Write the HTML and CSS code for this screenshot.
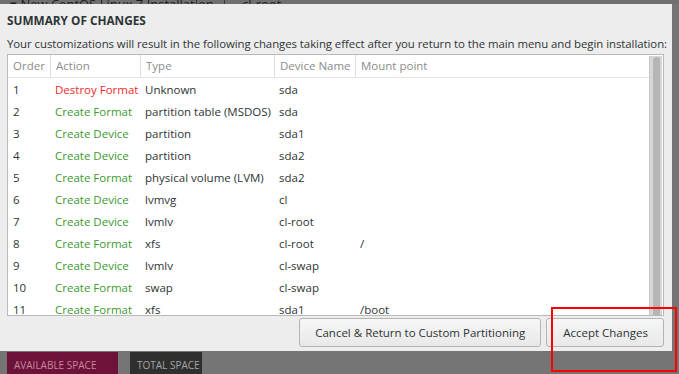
FILE: index.html
```html
<!DOCTYPE html>
<html>
<head>
    <title>Summary of Changes</title>
    <link rel="stylesheet" href="styles.css">
</head>
<body>

    <div class="behind-bar">
        <span class="behind-title">&#9662; New CentOS Linux 7 Installation</span>
        <span class="behind-mount">cl-root</span>
    </div>

    <div class="dialog">
        <h2 class="title">SUMMARY OF CHANGES</h2>
        <p class="intro">Your customizations will result in the following changes taking effect after you return to the main menu and begin installation:</p>

        <div class="table-box">
            <div class="table">
                <div class="row head">
                    <div>Order</div><div>Action</div><div>Type</div><div>Device Name</div><div>Mount point</div>
                </div>
                <div class="row"><div>1</div><div class="destroy">Destroy Format</div><div>Unknown</div><div>sda</div><div></div></div>
                <div class="row"><div>2</div><div class="create">Create Format</div><div>partition table (MSDOS)</div><div>sda</div><div></div></div>
                <div class="row"><div>3</div><div class="create">Create Device</div><div>partition</div><div>sda1</div><div></div></div>
                <div class="row"><div>4</div><div class="create">Create Device</div><div>partition</div><div>sda2</div><div></div></div>
                <div class="row"><div>5</div><div class="create">Create Format</div><div>physical volume (LVM)</div><div>sda2</div><div></div></div>
                <div class="row"><div>6</div><div class="create">Create Device</div><div>lvmvg</div><div>cl</div><div></div></div>
                <div class="row"><div>7</div><div class="create">Create Device</div><div>lvmlv</div><div>cl-root</div><div></div></div>
                <div class="row"><div>8</div><div class="create">Create Format</div><div>xfs</div><div>cl-root</div><div>/</div></div>
                <div class="row"><div>9</div><div class="create">Create Device</div><div>lvmlv</div><div>cl-swap</div><div></div></div>
                <div class="row"><div>10</div><div class="create">Create Format</div><div>swap</div><div>cl-swap</div><div></div></div>
                <div class="row"><div>11</div><div class="create">Create Format</div><div>xfs</div><div>sda1</div><div>/boot</div></div>
            </div>
            <div class="scrollbar"><div class="thumb"></div></div>
        </div>

        <div class="buttons">
            <button class="btn">Cancel &amp; Return to Custom Partitioning</button>
            <button class="btn">Accept Changes</button>
        </div>
    </div>

    <div class="space-bar">
        <div class="space available">AVAILABLE SPACE</div>
        <div class="space total">TOTAL SPACE</div>
    </div>

    <div class="highlight"></div>

</body>
</html>
```

FILE: styles.css
```css
body {
    margin: 0;
    width: 679px;
    height: 374px;
    overflow: hidden;
    background-color: #757575;
    font-family: "Open Sans", sans-serif;
    position: relative;
}
.behind-bar {
    height: 4px;
    overflow: hidden;
    display: flex;
    align-items: flex-end;
    background-color: #707070;
    color: #1e1e1e;
    font-size: 13px;
    line-height: 14px;
    white-space: nowrap;
}
.behind-title {
    padding-left: 10px;
    width: 214px;
    border-right: 1px solid #3c3c3c;
    margin-bottom: -7px;
}
.behind-mount {
    padding-left: 17px;
    margin-bottom: -7px;
}
.dialog {
    width: 672px;
    height: 347px;
    box-sizing: border-box;
    background-color: #ededed;
    padding: 8px 8px 0 7px;
}
.title {
    margin: 0;
    font-size: 11.8px;
    font-weight: bold;
    color: #2e3436;
    line-height: 16px;
}
.intro {
    margin: 9px 0 0;
    font-size: 11.4px;
    letter-spacing: -0.05px;
    line-height: 14px;
    color: #2e3436;
    white-space: nowrap;
}
.table-box {
    margin-top: 3px;
    height: 262px;
    box-sizing: border-box;
    border: 1px solid #b9b9b9;
    background-color: #fff;
    display: flex;
    overflow: hidden;
}
.table {
    flex: 1;
}
.row {
    display: grid;
    grid-template-columns: 42px 90px 134px 81px 1fr;
    height: 22px;
    align-items: center;
    font-size: 11.5px;
    color: #2e3436;
}
.row > div {
    padding-left: 5px;
    white-space: nowrap;
}
.row.head {
    height: 22px;
    border-bottom: 1px solid #e4e4e4;
    color: #8b8b8b;
}
.row.head > div {
    height: 22px;
    line-height: 22px;
    border-left: 1px solid #dedede;
}
.row.head > div:first-child {
    border-left: none;
}
.destroy {
    color: #f12a2a;
}
.create {
    color: #3a9a2e;
}
.scrollbar {
    width: 12px;
    margin: 1px 1px 0 0;
    background-color: #d6d6d6;
    border-left: 1px solid #c8c8c8;
    display: flex;
    justify-content: center;
}
.thumb {
    width: 7px;
    height: 100%;
    margin-top: 1px;
    background-color: #b5b5b5;
    border-radius: 4px 4px 0 0;
}
.buttons {
    margin-top: 2px;
    display: flex;
    justify-content: flex-end;
    gap: 5px;
}
.btn {
    height: 29px;
    font-family: "Open Sans", sans-serif;
    font-size: 11.5px;
    color: #2e3436;
    background: linear-gradient(#f6f6f6, #e9e9e9);
    border: 1px solid #b4b4b4;
    border-radius: 3px;
    padding: 0 15px;
}
.btn:last-child {
    padding: 0 15px 0 16px;
}
.space-bar {
    display: flex;
    gap: 12px;
    padding: 1px 0 0 7px;
}
.space {
    height: 22px;
    box-sizing: border-box;
    padding: 4px 7px 0;
    line-height: 18px;
    font-size: 10px;
    white-space: nowrap;
}
.available {
    width: 111px;
    background-color: #6d1238;
    color: #c7889f;
}
.total {
    width: 72px;
    background-color: #2f2f2f;
    color: #a5a5a5;
}
.highlight {
    position: absolute;
    left: 551px;
    top: 307px;
    width: 122px;
    height: 61px;
    border: 2px solid #ff0000;
}
```
